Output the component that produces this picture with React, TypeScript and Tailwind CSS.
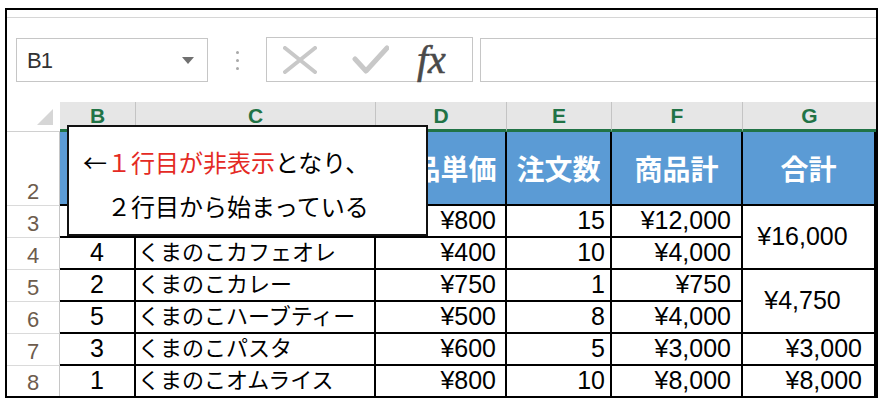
import React from "react";

const num = "font-['Liberation_Sans',Arial,sans-serif] text-[25px]";
const jp = "font-['Noto_Sans_CJK_JP',sans-serif]";

const rows = [
  { n: 3, b: "", c: "", d: "¥800", e: "15", f: "¥12,000", g: { text: "¥16,000", span: true } },
  { n: 4, b: "4", c: "くまのこカフェオレ", d: "¥400", e: "10", f: "¥4,000" },
  { n: 5, b: "2", c: "くまのこカレー", d: "¥750", e: "1", f: "¥750", g: { text: "¥4,750", span: true } },
  { n: 6, b: "5", c: "くまのこハーブティー", d: "¥500", e: "8", f: "¥4,000" },
  { n: 7, b: "3", c: "くまのこパスタ", d: "¥600", e: "5", f: "¥3,000", g: { text: "¥3,000", span: false } },
  { n: 8, b: "1", c: "くまのこオムライス", d: "¥800", e: "10", f: "¥8,000", g: { text: "¥8,000", span: false } },
];

// B..G headers of row 2 (B and C are covered by the callout)
const headers = ["", "", "商品単価", "注文数", "商品計", "合計"];

function RowNumber({ n, last }: { n: number; last?: boolean }) {
  return (
    <div
      className={`flex items-end justify-center pb-[1px] border-r border-[#c6c6c6] bg-white ${
        last ? "" : "border-b border-b-[#dadada]"
      } font-['Liberation_Sans',Arial,sans-serif] text-[22px] leading-[24px] text-[#6d5c4d]`}
    >
      {n}
    </div>
  );
}

function FormulaBar() {
  return (
    <div className="flex h-[84px] items-start pt-[20px]">
      {/* Name box */}
      <div className="ml-[9px] flex h-[44px] w-[192px] items-center justify-between border border-[#c6c6c6] pl-[10px] pr-[13px]">
        <span className="font-['Liberation_Sans',Arial,sans-serif] text-[22px] tracking-[-1px] text-[#333]">B1</span>
        <svg width="12" height="7" viewBox="0 0 12 7">
          <path d="M0 0 H12 L6 7 Z" fill="#707070" />
        </svg>
      </div>

      {/* separator dots */}
      <div className="ml-[27px] flex w-[4px] flex-col items-center gap-[5px] pt-[13px]">
        <span className="h-[3px] w-[3px] rounded-full bg-[#a8a8a8]" />
        <span className="h-[3px] w-[3px] rounded-full bg-[#a8a8a8]" />
        <span className="h-[3px] w-[3px] rounded-full bg-[#a8a8a8]" />
      </div>

      {/* cancel / enter / fx */}
      <div className="ml-[27px] -mt-[1px] flex h-[45px] w-[207px] items-center border border-[#c6c6c6] pl-[16px]">
        <svg width="34" height="28" viewBox="0 0 34 28">
          <path d="M2 2 L32 26 M32 2 L2 26" stroke="#c8c8c8" strokeWidth="4" strokeLinecap="round" />
        </svg>
        <svg className="ml-[35px]" width="37" height="29" viewBox="0 0 37 29">
          <path d="M3 14 L14 26 L35 3" stroke="#c8c8c8" strokeWidth="5" fill="none" strokeLinejoin="round" strokeLinecap="round" />
        </svg>
        <span className="ml-[28px] font-['Liberation_Serif','Times_New_Roman',serif] text-[40px] leading-none italic text-[#4a4a4a] [-webkit-text-stroke:0.6px_#4a4a4a]">
          fx
        </span>
      </div>

      {/* formula input */}
      <div className="ml-[7px] h-[44px] flex-1 border border-r-0 border-[#c6c6c6]" />
    </div>
  );
}

export default function App() {
  return (
    <div className="relative h-[408px] w-[886px] overflow-hidden bg-white">
      <div className="ml-[5px] mt-[8px] h-[390px] w-[873px] border-2 border-black bg-white">
        <div className="h-[7px]" />
        <div className="h-px bg-[#d6d6d6]" />
        <FormulaBar />

        <div className="grid grid-cols-[53px_76px_240px_131px_105px_131px_133px] grid-rows-[30px_74px_32px_32px_32px_32px_32px_30px]">
          {/* corner */}
          <div className="relative border-b border-[#d0d0d0] bg-white">
            <svg className="absolute right-[7px] bottom-[6px]" width="16" height="16" viewBox="0 0 16 16">
              <path d="M16 0 V16 H0 Z" fill="#d6d6d6" />
            </svg>
          </div>
          {["B", "C", "D", "E", "F", "G"].map((l, i) => (
            <div
              key={l}
              className={`flex items-center justify-center border-b-[3px] border-b-[#217346] bg-[#e6e6e6] pt-[1px] font-['Liberation_Sans',Arial,sans-serif] text-[21px] font-bold text-[#217346] ${
                i < 5 ? "border-r border-r-[#c4c4c4]" : ""
              }`}
            >
              {l}
            </div>
          ))}

          {/* row 2: table headers */}
          <RowNumber n={2} />
          {headers.map((h, i) => (
            <div
              key={i}
              className={`flex items-center justify-center overflow-hidden whitespace-nowrap border-r-2 border-b-2 border-black bg-[#5b9bd5] ${jp} text-[28px] font-bold text-white`}
            >
              {h}
            </div>
          ))}

          {rows.map((r, idx) => {
            const last = idx === rows.length - 1;
            const bb = last ? "" : "border-b-2";
            return (
              <React.Fragment key={r.n}>
                <RowNumber n={r.n} last={last} />
                <div className={`flex items-center justify-center border-r-2 ${bb} border-black ${num}`}>{r.b}</div>
                <div className={`flex items-center whitespace-nowrap border-r-2 ${bb} border-black pl-[2px] pb-[6px] ${jp} text-[22px] text-black`}>
                  {r.c}
                </div>
                <div className={`flex items-center justify-end border-r-2 ${bb} border-black pr-[9px] ${num}`}>{r.d}</div>
                <div className={`flex items-center justify-end border-r-2 ${bb} border-black pr-[5px] ${num}`}>{r.e}</div>
                <div className={`flex items-center justify-end border-r-2 ${bb} border-black pr-[10px] ${num}`}>{r.f}</div>
                {r.g &&
                  (r.g.span ? (
                    <div className={`row-span-2 flex items-center justify-center border-r-2 border-b-2 border-black pr-[12px] ${num}`}>
                      {r.g.text}
                    </div>
                  ) : (
                    <div className={`flex items-center justify-end border-r-2 ${bb} border-black pr-[12px] ${num}`}>{r.g.text}</div>
                  ))}
              </React.Fragment>
            );
          })}
        </div>
      </div>

      {/* callout over the sheet */}
      <div className={`absolute left-[67px] top-[125px] h-[111px] w-[361px] border-2 border-[#111] bg-white pl-[14px] pt-[13px] ${jp} text-[24px] leading-[44px] text-black`}>
        <div className="whitespace-nowrap">
          ←<span className="text-[#e42a24]">１行目が非表示</span>となり、
        </div>
        <div className="whitespace-nowrap">　２行目から始まっている</div>
      </div>
    </div>
  );
}
